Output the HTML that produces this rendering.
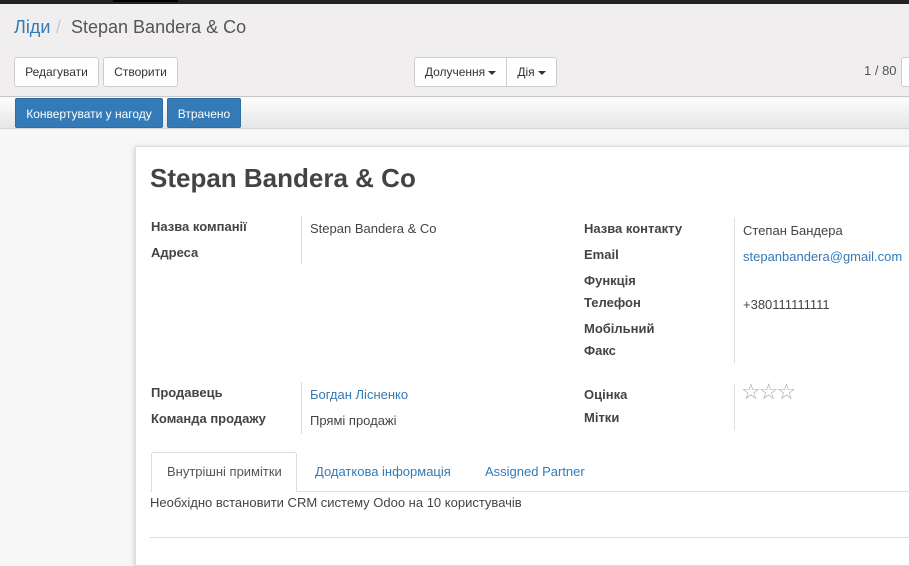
<!DOCTYPE html>
<html><head><meta charset="utf-8"><style>
*{margin:0;padding:0;box-sizing:border-box}
body{width:909px;height:545px;overflow:hidden;position:relative;font-family:"Liberation Sans",Arial,sans-serif;font-size:13px;color:#444;background:#f7f7f7}
.a{position:absolute;white-space:nowrap}
.top{left:0;top:0;width:909px;height:4px;background:#222}
.top2{left:113px;top:0;width:65px;height:2px;background:#000}
.cp{left:0;top:4px;width:909px;height:93px;background:#f0eeee;border-bottom:1px solid #c8c8c8}
.btn{position:absolute;background:#fff;border:1px solid #ccc;border-radius:3px;height:30px;line-height:28px;font-size:12px;color:#333;text-align:center}
.sb{left:0;top:98px;width:909px;height:31px;background:linear-gradient(#fdfdfd,#e6e6e6);border-bottom:1px solid #d4d4d4}
.bb{position:absolute;top:98px;height:30px;line-height:30px;background:#337ab7;color:#fff;font-size:12px;text-align:center;border:1px solid #2e6da4;border-radius:2px}
.sheet{left:135px;top:146px;width:800px;height:420px;background:#fff;border:1px solid #ddd;box-shadow:0 2px 6px rgba(0,0,0,.2)}
.l{font-weight:bold;font-size:13px;color:#444}
.v{font-size:13px;color:#444}
.lk{color:#337ab7}
.vl{position:absolute;width:1px;background:#ddd}
.car{display:inline-block;width:0;height:0;border-left:4px solid transparent;border-right:4px solid transparent;border-top:4px solid #333;vertical-align:middle;margin-left:3px}
</style></head><body>
<div class="a top"></div><div class="a top2"></div>
<div class="a cp"></div>
<div class="a" style="left:14px;top:17px;font-size:18px;color:#337ab7">Ліди</div>
<div class="a" style="left:56px;top:17px;font-size:18px;color:#ccc">/</div>
<div class="a" style="left:71px;top:17px;font-size:18px;color:#555">Stepan Bandera &amp; Co</div>
<div class="btn" style="left:14px;top:57px;width:85px">Редагувати</div>
<div class="btn" style="left:103px;top:57px;width:75px">Створити</div>
<div class="btn" style="left:414px;top:57px;width:93px;border-radius:3px 0 0 3px">Долучення<span class="car"></span></div>
<div class="btn" style="left:506px;top:57px;width:51px;border-radius:0 3px 3px 0">Дія<span class="car"></span></div>
<div class="a" style="left:864px;top:63px;font-size:13px;color:#555">1 / 80</div>
<div class="btn" style="left:901px;top:57px;width:20px"></div>
<div class="a sb"></div>
<div class="bb" style="left:15px;width:148px">Конвертувати у нагоду</div>
<div class="bb" style="left:167px;width:74px">Втрачено</div>
<div class="a sheet"></div>
<div class="a" style="left:150px;top:163px;font-size:26px;font-weight:bold;color:#444">Stepan Bandera &amp; Co</div>
<div class="a l" style="left:151px;top:219px">Назва компанії</div>
<div class="a l" style="left:151px;top:245px">Адреса</div>
<div class="vl" style="left:301px;top:216px;height:48px"></div>
<div class="a v" style="left:310px;top:221px">Stepan Bandera &amp; Co</div>
<div class="a l" style="left:584px;top:221px">Назва контакту</div>
<div class="a l" style="left:584px;top:247px">Email</div>
<div class="a l" style="left:584px;top:273px">Функція</div>
<div class="a l" style="left:584px;top:295px">Телефон</div>
<div class="a l" style="left:584px;top:321px">Мобільний</div>
<div class="a l" style="left:584px;top:343px">Факс</div>
<div class="vl" style="left:734px;top:218px;height:145px"></div>
<div class="a v" style="left:743px;top:223px">Степан Бандера</div>
<div class="a v lk" style="left:743px;top:249px">stepanbandera@gmail.com</div>
<div class="a v" style="left:743px;top:297px">+380111111111</div>
<div class="a l" style="left:151px;top:385px">Продавець</div>
<div class="a l" style="left:151px;top:411px">Команда продажу</div>
<div class="vl" style="left:301px;top:382px;height:52px"></div>
<div class="a v lk" style="left:310px;top:387px">Богдан Лісненко</div>
<div class="a v" style="left:310px;top:413px">Прямі продажі</div>
<div class="a l" style="left:584px;top:387px">Оцінка</div>
<div class="a l" style="left:584px;top:410px">Мітки</div>
<div class="vl" style="left:734px;top:384px;height:46px"></div>
<div class="a" style="left:741px;top:379px;font-size:22px;color:#aaa;letter-spacing:-2px">☆☆☆</div>
<div class="a" style="left:150px;top:491px;width:760px;height:1px;background:#ddd"></div>
<div class="a" style="left:151px;top:452px;width:146px;height:40px;background:#fff;border:1px solid #ddd;border-bottom:none;border-radius:3px 3px 0 0"></div>
<div class="a v" style="left:167px;top:464px;color:#555">Внутрішні примітки</div>
<div class="a v lk" style="left:315px;top:464px">Додаткова інформація</div>
<div class="a v lk" style="left:485px;top:464px">Assigned Partner</div>
<div class="a v" style="left:150px;top:495px">Необхідно встановити CRM систему Odoo на 10 користувачів</div>
<div class="a" style="left:150px;top:537px;width:760px;height:1px;background:#ddd"></div>
</body></html>
